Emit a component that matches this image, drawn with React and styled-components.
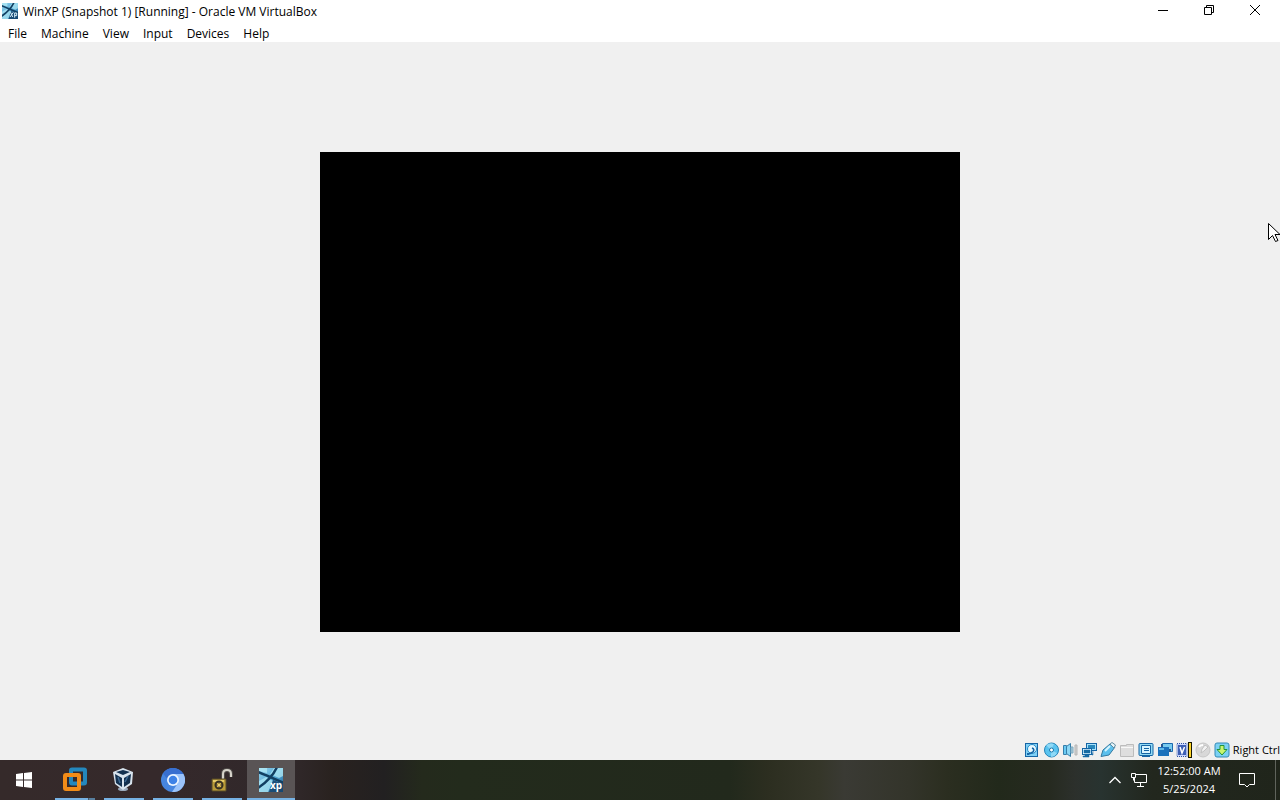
import React from "react";
import styled, { createGlobalStyle } from "styled-components";

const GlobalStyle = createGlobalStyle`
  * { box-sizing: border-box; }
  body {
    margin: 0;
    font-family: "Open Sans", "Noto Sans", sans-serif;
    font-size: 11px;
    line-height: 16px;
    color: #000;
  }
  button { font: inherit; color: inherit; border: 0; padding: 0; background: none; }
  svg { display: block; flex: none; }
`;

const Desktop = styled.div`
  display: flex;
  flex-direction: column;
  min-height: 100vh;
  background: #f0f0f0;
`;

const TitleBar = styled.header`
  display: flex;
  align-items: center;
  height: 22px;
  padding-left: 2px;
  background: #fff;
`;

const Title = styled.h1`
  flex: 1;
  margin: 0 0 0 5px;
  padding-top: 2px;
  font-size: 12px;
  line-height: 16px;
  font-weight: 400;
  white-space: nowrap;
`;

const WindowButtons = styled.div`
  display: flex;
  padding-right: 2px;
`;

const WindowButton = styled.button`
  display: flex;
  justify-content: center;
  align-items: center;
  width: 46px;
  height: 22px;
  padding-bottom: 2px;
`;

const MenuBar = styled.nav`
  display: flex;
  gap: 14px;
  height: 20px;
  padding: 0 8px;
  font-size: 12px;
  background: #fff;
`;

const MenuButton = styled.button`
  height: 20px;
  padding-top: 4px;
  text-align: left;
`;

const Workspace = styled.main`
  flex: 1;
  display: flex;
  align-items: center;
  justify-content: center;
`;

const GuestScreen = styled.section`
  width: 50%;
  aspect-ratio: 4 / 3;
  background: #000;
`;

const StatusBar = styled.footer`
  display: flex;
  justify-content: flex-end;
  align-items: center;
  gap: 3px;
  height: 18px;
  padding-bottom: 2px;
`;

const StatusButton = styled.button`
  width: 16px;
  height: 16px;
`;

const HostKey = styled.span`
  white-space: nowrap;
`;

const Taskbar = styled.footer`
  display: flex;
  height: 40px;
  color: #fff;
  background: linear-gradient(
    90deg,
    #352a2a 0%, #35292b 12%, #30282a 23%, #29221f 26%, #222021 30%,
    #242a1c 33%, #232b1c 36%, #22291c 57%, #2c2e20 60%, #353629 64%,
    #3a3a34 66%, #33342a 71%, #2b2e20 74%, #22291b 78%, #262a20 82%,
    #2c302c 84%, #283330 86%, #22271e 90%, #20251b 100%
  );
`;

const TaskButton = styled.button`
  display: flex;
  align-items: center;
  justify-content: center;
  width: 48px;
  height: 40px;
`;

const Apps = styled.div`
  display: flex;
  gap: 1px;
  margin-left: 3px;
`;

const AppButton = styled(TaskButton)`
  position: relative;
  background: ${(p) => (p.$active ? "#595455" : "transparent")};
  &::after {
    content: "";
    position: absolute;
    bottom: 0;
    left: ${(p) => (p.$active ? 0 : 4)}px;
    right: ${(p) => (p.$active ? 0 : 4)}px;
    height: 2px;
    background: ${(p) =>
      p.$stacked
        ? "linear-gradient(90deg, #76b2e4 82%, #47596b 82%, #47596b 86%, #587f9f 86%)"
        : "#76b2e4"};
  }
`;

const Tray = styled.div`
  display: flex;
  align-items: center;
  margin-left: auto;
`;

const TrayButton = styled.button`
  display: flex;
  align-items: center;
  justify-content: center;
  width: ${(p) => p.$width || 24}px;
  height: 40px;
`;

const Clock = styled.button`
  width: 76px;
  height: 40px;
  line-height: 18px;
  white-space: nowrap;
`;

const ShowDesktop = styled.button`
  width: 5px;
  height: 40px;
  margin-left: 8px;
  border-left: 1px solid #60645c;
`;

const Pointer = styled.svg`
  position: fixed;
  top: 223px;
  right: 0;
  pointer-events: none;
`;

function XpIcon({ size, label }) {
  return (
    <svg width={size} height={size} viewBox="0 0 24 24" aria-hidden="true">
      <defs>
        <linearGradient id="xpSky" x1="0" y1="0" x2="1" y2="1">
          <stop offset="0" stopColor="#9ad6ee" />
          <stop offset=".5" stopColor="#54a9d6" />
          <stop offset="1" stopColor="#1c5d94" />
        </linearGradient>
      </defs>
      <path d="M0 0h24v24H0z" fill="url(#xpSky)" />
      <path d="M11 6 15 0h9v8l-4 2zM0 13l7-4 7 4-5 11H0zM0 0h8v5L0 3z" fill="#b2e9f6" opacity=".75" />
      <path d="M-1 4C7 7 15 11 25 15M18-1C14 8 8 14-1 20" fill="none" stroke="#123f62" strokeWidth="2.500" />
      <path d="M14 12 24 16v8H10z" fill="#15436b" opacity=".85" />
      {label ? (
        <text x="11" y="21" fontFamily="Open Sans, sans-serif" fontSize="10" fontWeight="700" fill="#fff">xp</text>
      ) : (
        <path d="m13 14 3 7m1-7-5 7m7-6v7m0-7h3v4h-3" fill="none" stroke="#d9eef8" strokeWidth="1.5" />
      )}
    </svg>
  );
}

const blue = "#1565a5";
const sky = "#69c9f2";

const statusIcons = [
  ["Hard disks", <>
    <rect x="1.5" y="1.5" width="12" height="13" fill="#7fd0f6" stroke={blue} />
    <circle cx="8" cy="7" r="4.500" fill="#e8f9ff" stroke="#2387c4" />
    <path d="M8 6q3 1 1 4l-4 2" fill="none" stroke={blue} strokeWidth="1.6" />
    <path d="M3 11h2v2H3z" fill={blue} />
  </>],
  ["Optical drives", <>
    <circle cx="8.500" cy="8" r="7" fill="#5ac3ef" stroke="#2484b8" />
    <path d="M8 8 3 3q4-3 8-1zM8 8l6 3q-2 4-6 4z" fill="#a4e3fb" opacity=".7" />
    <circle cx="8.500" cy="8" r="2" fill="#fff" stroke="#1976a9" />
  </>],
  ["Audio", <>
    <path d="M1.5 3.5h3v9h-3z" fill={sky} stroke="#347eaa" />
    <path d="m4.500 4.500 4-3v13l-4-3z" fill="#8bd7f5" stroke="#347eaa" />
    <path d="M9 5h2v6H9z" fill="#a9cfe0" stroke="#7fa9be" />
    <path d="M13 3v10h2V3z" fill="#d2d2d2" stroke="#b5b5b5" />
  </>],
  ["Network", <>
    <rect x="5.500" y="1.500" width="10" height="7" fill="#a6e1fa" stroke={blue} />
    <path d="M7 3h7v4H7z" fill="#2788bd" />
    <rect x="1.500" y="6.500" width="9" height="6" fill="#d6f4ff" stroke={blue} />
    <path d="M3 8h6v3H3zM4 13h4v2H2v-1h2zM12 9v4h-1" fill="#176ba2" stroke={blue} strokeWidth=".5" />
  </>],
  ["USB", <>
    <path d="M1 14.500 3 8l7-6 5 3-6 8z" fill="#5cc0ed" stroke="#3579a0" />
    <path d="m10 2 2-1.500 3.500 2.500L14 6z" fill="#e8f5fa" stroke="#608ba0" />
    <path d="m5 9 5-5" stroke="#d6f5ff" strokeWidth="2" />
  </>],
  ["Shared folders", <>
    <path d="M1.500 3.500h6v-1h7v12h-13z" fill="#dedede" stroke="#bcbcbc" />
    <path d="M2 5.500h12" stroke="#f8f8f8" />
  </>],
  ["Display", <>
    <rect x="1" y="1.500" width="14" height="12" rx="1" fill="#93dbf5" stroke={blue} />
    <path d="M3.500 3.500h9v8h-9z" fill="#d6f4ff" stroke={blue} />
    <path d="M6 6.500h5m-5 2h5M4 14.500h8" stroke={blue} />
  </>],
  ["Recording", <>
    <path d="M5.500 1.500h10v8h-10z" fill="#77caee" stroke="#1a69ad" />
    <path d="M1 5h11v9H1z" fill="#1b71bc" />
    <path d="M2 6h5v2H2z" fill="#62baea" />
    <path d="M4 2h2v3H4zM12 7h2v3h-2z" fill="#28558d" />
  </>],
  ["Processor", <>
    <rect x="1" y="1.500" width="10" height="13" fill="#cbd7ff" stroke="#3154a5" strokeDasharray="1 1" />
    <path d="M2 3h8v10H2z" fill="#3d5fb4" />
    <path d="m4 5 2 6 2.500-6" fill="none" stroke="#fff" strokeWidth="1.500" />
    <path d="M12 0h4v16h-4z" fill="#181800" />
    <path d="M13 1h2v14h-2z" fill="#ffd52b" />
  </>],
  ["Mouse integration", <>
    <circle cx="8" cy="8" r="7" fill="#d8d8d8" stroke="#c6c6c6" />
    <path d="m6 11 1-4 3-4 3 2-4 4z" fill="#f2f2f2" stroke="#c1c1c1" />
    <path d="M4 5q1-2 4-2" fill="none" stroke="#fff" strokeWidth="2" />
  </>],
  ["Keyboard capture", <>
    <rect x="1" y="1" width="14" height="14" rx="2" fill="#7bd1f4" stroke="#368ab7" />
    <path d="M6 3.500h4v4h3L8 13 3 7.500h3z" fill="#c9f66e" stroke="#23933a" />
  </>],
];

const taskApps = [
  ["VMware", <svg width="26" height="26" viewBox="0 0 26 26" aria-hidden="true">
    <rect x="9" y="2.500" width="14" height="14" rx="1" fill="none" stroke="#2488bd" strokeWidth="4" />
    <rect x="3" y="8" width="14" height="14" rx="1" fill="none" stroke="#f28c18" strokeWidth="4" />
    <path d="M9 10v6.500h6" fill="none" stroke="#2488bd" strokeWidth="2" />
  </svg>],
  ["VirtualBox", <svg width="24" height="24" viewBox="0 0 24 24" aria-hidden="true">
    <ellipse cx="11" cy="21" rx="5" ry="2" fill="#9aaabd" />
    <path d="m11 0 10 4-1 12-9 6-8-6L1 4z" fill="#d8e4ee" />
    <path d="m11 2 7 2-7 3-7-3zM3 6l7 4v9l-6-4zM12 10l7-4-1 9-6 4z" fill="#12304f" />
    <path d="m6 9 2 6m8-7-3 6" fill="none" stroke="#3c6891" strokeWidth="1.500" />
  </svg>],
  ["Chromium", <svg width="24" height="24" viewBox="0 0 24 24" aria-hidden="true">
    <circle cx="12" cy="12" r="12" fill="#4685df" />
    <path d="M12 6h10.400A12 12 0 0 1 11 24l6-9z" fill="#9bc3fa" />
    <path d="M2 5.400A12 12 0 0 1 22.400 6H12q-5 0-5 6z" fill="#386fd0" />
    <circle cx="12" cy="12" r="6" fill="#edf5ff" />
    <circle cx="12" cy="12" r="4.300" fill="#3e82e6" />
  </svg>],
  ["Unlocker", <svg width="24" height="24" viewBox="0 0 24 24" aria-hidden="true">
    <path d="M13 12V6q0-4 4-4t4 4v3" fill="none" stroke="#514d4a" strokeWidth="4" />
    <path d="M13 12V6q0-4 4-4t4 4v3" fill="none" stroke="#d6d3ca" strokeWidth="2" />
    <path d="M2 11h14v12H2z" fill="#b99b39" stroke="#574b28" />
    <path d="M3 12h11v2H3z" fill="#e6cb68" />
    <circle cx="9" cy="17" r="3.500" fill="#dfbd4f" stroke="#373022" strokeWidth="2" />
    <path d="M9 13v8m-4-4h8" stroke="#373022" />
    <circle cx="9" cy="17" r="1.500" fill="#efd16c" />
  </svg>],
  ["WinXP", <XpIcon size={24} label />],
];

const menus = ["File", "Machine", "View", "Input", "Devices", "Help"];

export default function App() {
  return (
    <Desktop>
      <GlobalStyle />
      <TitleBar>
        <XpIcon size={16} />
        <Title>WinXP (Snapshot 1) [Running] - Oracle VM VirtualBox</Title>
        <WindowButtons>
          <WindowButton aria-label="Minimize">
            <svg width="10" height="10"><path d="M0 5.500h10" stroke="#000" /></svg>
          </WindowButton>
          <WindowButton aria-label="Restore">
            <svg width="10" height="10" fill="none" stroke="#000"><path d="M.5 2.500h7v7h-7zM2.500 2.500v-2h7v7h-2" /></svg>
          </WindowButton>
          <WindowButton aria-label="Close">
            <svg width="10" height="10" stroke="#000"><path d="m0 0 10 10M10 0 0 10" /></svg>
          </WindowButton>
        </WindowButtons>
      </TitleBar>
      <MenuBar>
        {menus.map((name) => <MenuButton key={name}>{name}</MenuButton>)}
      </MenuBar>
      <Workspace>
        <GuestScreen aria-label="Guest display" />
      </Workspace>
      <StatusBar>
        {statusIcons.map(([name, art]) => (
          <StatusButton key={name} aria-label={name}>
            <svg width="16" height="16" viewBox="0 0 16 16" aria-hidden="true">{art}</svg>
          </StatusButton>
        ))}
        <HostKey>Right Ctrl</HostKey>
      </StatusBar>
      <Taskbar>
        <TaskButton aria-label="Start">
          <svg width="16" height="16" viewBox="0 0 16 16" fill="#fff"><path d="m0 2 7-1v6.500H0zM8 1l8-1v7.500H8zM0 8.500h7V15l-7-1zM8 8.500h8V16l-8-1z" /></svg>
        </TaskButton>
        <Apps>
          {taskApps.map(([name, art]) => (
            <AppButton key={name} aria-label={name} $active={name === "WinXP"} $stacked={name === "VMware"}>{art}</AppButton>
          ))}
        </Apps>
        <Tray>
          <TrayButton aria-label="Show hidden icons">
            <svg width="12" height="8" fill="none" stroke="#fff" strokeWidth="1.300"><path d="m.5 7 5.500-5.500L11.500 7" /></svg>
          </TrayButton>
          <TrayButton aria-label="Network status">
            <svg width="16" height="16" fill="none" stroke="#fff"><path d="M4.500 2.500h11v8h-12v-5M9.500 10.500v4M6 14.500h7M.5 1.500h4v4h-4zM2.500 5.500v3" /></svg>
          </TrayButton>
          <Clock>12:52:00 AM<br />5/25/2024</Clock>
          <TrayButton $width={40} aria-label="Notifications">
            <svg width="16" height="16" fill="none" stroke="#fff"><path d="M.5 1.500h15v11h-5L8 15l-2.500-2.500h-5z" /></svg>
          </TrayButton>
          <ShowDesktop aria-label="Show desktop" />
        </Tray>
      </Taskbar>
      <Pointer width="12" height="20" viewBox="0 0 12 20" aria-hidden="true">
        <path d="M.5.500v16l4-4 3 6 2.500-1-3-6H12z" fill="#fff" stroke="#000" />
      </Pointer>
    </Desktop>
  );
}
